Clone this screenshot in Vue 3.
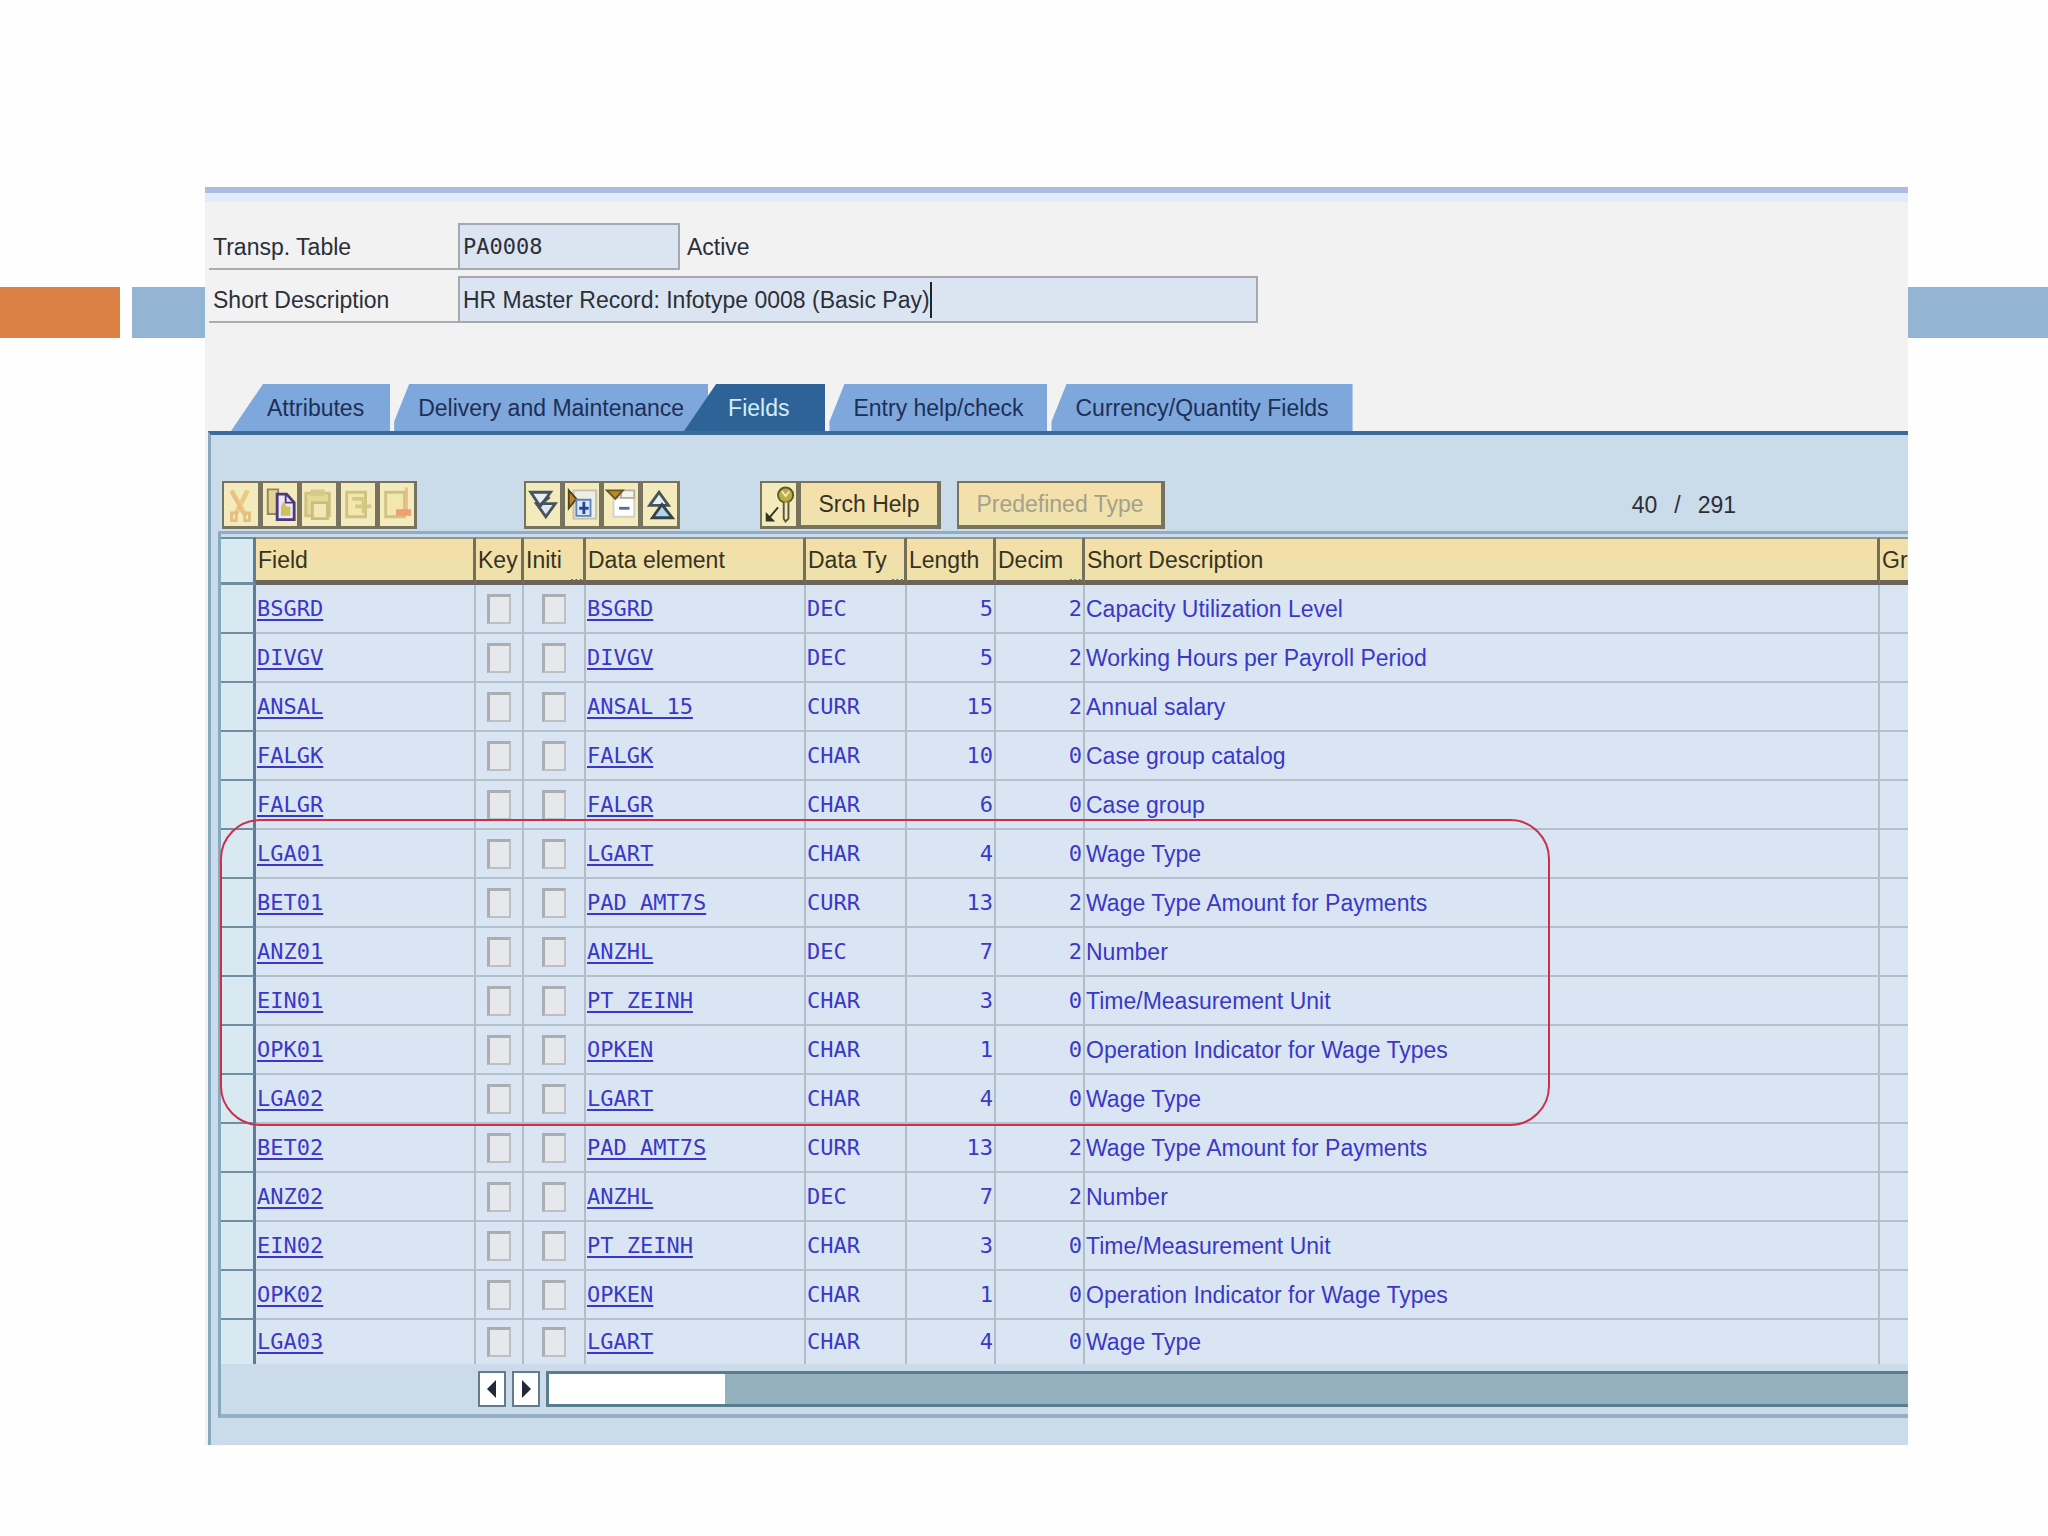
<template>
    <div class="slide">
        <div class="band">
            <div class="band-accent"></div>
            <div class="band-main"></div>
        </div>

        <main class="window">
            <!-- Header fields -->
            <form class="head" @submit.prevent>
                <div class="head-row">
                    <label for="table-name" class="head-label">Transp. Table</label>
                    <input
                        id="table-name"
                        v-model="tableName"
                        class="box box-name"
                        type="text"
                    />
                    <span class="status">Active</span>
                </div>
                <div class="head-row">
                    <label for="table-text" class="head-label">Short Description</label>
                    <div class="box box-text">
                        <input
                            id="table-text"
                            v-model="tableText"
                            class="text-input"
                            type="text"
                        />
                        <span class="caret"></span>
                    </div>
                </div>
            </form>

            <!-- Tabs -->
            <nav class="tabs">
                <button
                    v-for="tab in tabs"
                    :key="tab"
                    type="button"
                    class="tab"
                    :class="{ active: tab === activeTab }"
                    @click="activeTab = tab"
                >
                    {{ tab }}
                </button>
            </nav>

            <section class="body">
                <!-- Toolbar -->
                <div class="toolbar">
                    <div class="group group-edit">
                        <button type="button" class="tool" disabled aria-label="Cut">
                            <svg viewBox="0 0 36 44">
                                <path d="M8 7l15 27M25 7L12 33" stroke="#e6cc84" stroke-width="5" fill="none" />
                                <path d="M8 9l12 22" stroke="#efb98a" stroke-width="3" fill="none" />
                                <path d="M8 31h5v8H8zM22 31h5v8h-5z" stroke="#e5bd80" stroke-width="3" fill="none" />
                            </svg>
                        </button>
                        <button type="button" class="tool" aria-label="Copy">
                            <svg viewBox="0 0 36 44">
                                <path d="M5 6h11v26H5z" fill="#e3d491" stroke="#8f8560" stroke-width="2" />
                                <path d="M15 11h10l8 9v18H15z" fill="#ece6ff" stroke="#4b3b7c" stroke-width="3" />
                                <path d="M24 11v9h9" fill="none" stroke="#4b3b7c" stroke-width="2" />
                                <path d="M19 34V24l3-5 3 5h4v10z" fill="#cfc058" />
                            </svg>
                        </button>
                        <button type="button" class="tool" disabled aria-label="Paste">
                            <svg viewBox="0 0 36 44">
                                <path d="M4 10h25v24H4z" fill="#e5d998" stroke="#cfc182" stroke-width="3" />
                                <path d="M9 6h15v7H9z" fill="#d8ca8c" />
                                <path d="M11 20h16v17H11z" fill="#f2e8b4" stroke="#cbbd80" stroke-width="3" />
                            </svg>
                        </button>
                        <button type="button" class="tool" disabled aria-label="Insert row">
                            <svg viewBox="0 0 36 44">
                                <path d="M6 9h20v26H6z" fill="#f2e8ae" stroke="#cfc284" stroke-width="3" />
                                <path d="M12 16h12M15 24h17M24 18v13" stroke="#d6c884" stroke-width="4" />
                            </svg>
                        </button>
                        <button type="button" class="tool" disabled aria-label="Delete row">
                            <svg viewBox="0 0 36 44">
                                <path d="M6 9h20v26H6z" fill="#f2e8ae" stroke="#cfc284" stroke-width="3" />
                                <path d="M28 4v24" stroke="#f2b88c" stroke-width="3" />
                                <path d="M17 27h16v7H17z" fill="#eea070" />
                            </svg>
                        </button>
                    </div>

                    <div class="group group-tree">
                        <button type="button" class="tool" aria-label="Expand all">
                            <svg viewBox="0 0 36 44">
                                <path d="M11 21h20L21 35z" fill="#dce9f2" stroke="#46555a" stroke-width="3" />
                                <path d="M5 9h21L15 24z" fill="#e6eef4" stroke="#46555a" stroke-width="3" />
                                <path d="M13 24L25 14" fill="none" stroke="#46555a" stroke-width="3" />
                            </svg>
                        </button>
                        <button type="button" class="tool" aria-label="Expand">
                            <svg viewBox="0 0 36 44">
                                <path d="M9 7h24v30H9z" fill="#efeee6" stroke="#c4bfae" stroke-width="2" />
                                <path d="M4 7l8 9-8 10z" fill="#b78a2c" stroke="#54421c" stroke-width="2" />
                                <path d="M12 17h15v17H12z" fill="#dbe8ff" stroke="#5b84bc" stroke-width="2" />
                                <path d="M20 19v13M15 26h10" stroke="#25459a" stroke-width="3" />
                            </svg>
                        </button>
                        <button type="button" class="tool" aria-label="Collapse">
                            <svg viewBox="0 0 36 44">
                                <path d="M10 15h22v20H10z" fill="#fff" stroke="#d4d2c4" stroke-width="2" />
                                <path d="M18 7h14v8H18z" fill="#f4f3ee" stroke="#b4b1a4" stroke-width="2" />
                                <path d="M3 7h17l-8 9z" fill="#b78a2c" stroke="#6b5320" stroke-width="2" />
                                <path d="M16 26h11" stroke="#5668a8" stroke-width="3" />
                            </svg>
                        </button>
                        <button type="button" class="tool" aria-label="Collapse all">
                            <svg viewBox="0 0 36 44">
                                <path d="M17 9l10 14H7z" fill="#e6eef4" stroke="#46555a" stroke-width="3" />
                                <path d="M20 22l11 14H10z" fill="#b4d4ea" stroke="#33434a" stroke-width="3" />
                            </svg>
                        </button>
                    </div>

                    <div class="group group-help">
                        <button type="button" class="tool" aria-label="Foreign keys">
                            <svg viewBox="0 0 36 44">
                                <circle cx="25" cy="12" r="8" fill="#b8ad48" stroke="#5d582c" stroke-width="2" />
                                <path d="M21 8l4 5 4-5" fill="none" stroke="#f5edb8" stroke-width="2" />
                                <path d="M23 20v17l2 3 3-3V20" fill="#efe9cc" stroke="#5d582c" stroke-width="2" />
                                <path d="M17 25L7 37" stroke="#32321f" stroke-width="2" />
                                <path d="M4 30v10h10z" fill="#32321f" />
                            </svg>
                        </button>
                        <button type="button" class="push push-search">Srch Help</button>
                    </div>
                    <button type="button" class="push push-type" disabled>Predefined Type</button>

                    <div class="counter">
                        <span>40</span>
                        <span>/</span>
                        <span>291</span>
                    </div>
                </div>

                <!-- Field list -->
                <div class="frame">
                    <table class="grid">
                        <colgroup>
                            <col class="c-sel" />
                            <col class="c-field" />
                            <col class="c-key" />
                            <col class="c-init" />
                            <col class="c-elem" />
                            <col class="c-type" />
                            <col class="c-num" />
                            <col class="c-num" />
                            <col />
                            <col class="c-group" />
                        </colgroup>
                        <thead>
                            <tr>
                                <th class="sel"></th>
                                <th v-for="col in columns" :key="col.label">
                                    {{ col.label }}
                                    <i v-if="col.cut" class="cut">...</i>
                                </th>
                            </tr>
                        </thead>
                        <tbody>
                            <tr v-for="row in rows" :key="row[0]">
                                <td class="sel"></td>
                                <td class="mono"><a href="#">{{ row[0] }}</a></td>
                                <td class="check">
                                    <input type="checkbox" :aria-label="row[0] + ' key'" />
                                </td>
                                <td class="check">
                                    <input type="checkbox" :aria-label="row[0] + ' initial'" />
                                </td>
                                <td class="mono"><a href="#">{{ row[1] }}</a></td>
                                <td class="mono">{{ row[2] }}</td>
                                <td class="mono num">{{ row[3] }}</td>
                                <td class="mono num">{{ row[4] }}</td>
                                <td class="desc">{{ row[5] }}</td>
                                <td></td>
                            </tr>
                        </tbody>
                    </table>

                    <div class="scroll">
                        <button type="button" class="arrow" aria-label="Scroll left">
                            <svg viewBox="0 0 20 28"><path d="M14 5v18L5 14z" fill="#222a38" /></svg>
                        </button>
                        <button type="button" class="arrow" aria-label="Scroll right">
                            <svg viewBox="0 0 20 28"><path d="M6 5v18l9-9z" fill="#222a38" /></svg>
                        </button>
                        <div class="track">
                            <div class="thumb"></div>
                        </div>
                    </div>

                    <div class="marker"></div>
                </div>
            </section>
        </main>
    </div>
</template>

<script setup>
import { ref } from "vue";

const tableName = ref("PA0008");
const tableText = ref("HR Master Record: Infotype 0008 (Basic Pay)");

const tabs = [
    "Attributes",
    "Delivery and Maintenance",
    "Fields",
    "Entry help/check",
    "Currency/Quantity Fields",
];
const activeTab = ref("Fields");

const columns = [
    { label: "Field" },
    { label: "Key" },
    { label: "Initi", cut: true },
    { label: "Data element" },
    { label: "Data Ty", cut: true },
    { label: "Length" },
    { label: "Decim", cut: true },
    { label: "Short Description" },
    { label: "Gr" },
];

// field, data element, type, length, decimals, description
const rows = [
    ["BSGRD", "BSGRD", "DEC", 5, 2, "Capacity Utilization Level"],
    ["DIVGV", "DIVGV", "DEC", 5, 2, "Working Hours per Payroll Period"],
    ["ANSAL", "ANSAL_15", "CURR", 15, 2, "Annual salary"],
    ["FALGK", "FALGK", "CHAR", 10, 0, "Case group catalog"],
    ["FALGR", "FALGR", "CHAR", 6, 0, "Case group"],
    ["LGA01", "LGART", "CHAR", 4, 0, "Wage Type"],
    ["BET01", "PAD_AMT7S", "CURR", 13, 2, "Wage Type Amount for Payments"],
    ["ANZ01", "ANZHL", "DEC", 7, 2, "Number"],
    ["EIN01", "PT_ZEINH", "CHAR", 3, 0, "Time/Measurement Unit"],
    ["OPK01", "OPKEN", "CHAR", 1, 0, "Operation Indicator for Wage Types"],
    ["LGA02", "LGART", "CHAR", 4, 0, "Wage Type"],
    ["BET02", "PAD_AMT7S", "CURR", 13, 2, "Wage Type Amount for Payments"],
    ["ANZ02", "ANZHL", "DEC", 7, 2, "Number"],
    ["EIN02", "PT_ZEINH", "CHAR", 3, 0, "Time/Measurement Unit"],
    ["OPK02", "OPKEN", "CHAR", 1, 0, "Operation Indicator for Wage Types"],
    ["LGA03", "LGART", "CHAR", 4, 0, "Wage Type"],
];
</script>

<style>
body {
    background: #fefefe;
}
</style>

<style scoped>
.slide {
    position: relative;
    padding: 187px 140px 91px 205px;
    font-family: "Liberation Sans", Arial, sans-serif;
    font-size: 23px;
    line-height: 32px;
    color: #2b2f36;
}

.slide * {
    box-sizing: border-box;
}

button,
input {
    font: inherit;
    color: inherit;
    margin: 0;
    padding: 0;
    border: 0;
    border-radius: 0;
    background: none;
}

svg {
    display: block;
    width: 100%;
    height: 100%;
}

/* Coloured strip behind the window */
.band {
    position: absolute;
    top: 287px;
    left: 0;
    right: 0;
    height: 51px;
    display: flex;
    gap: 12px;
}

.band-accent {
    width: 120px;
    background: #db8144;
}

.band-main {
    flex: 1;
    background: #94b4d3;
}

.window {
    position: relative;
    overflow: hidden;
    background: #f2f2f3;
    border-top: 6px solid #aebce2;
}

/* Header fields */
.head {
    display: flex;
    flex-direction: column;
    gap: 6px;
    padding: 30px 0 0 4px;
    box-shadow: inset 0 9px 0 #e2ebfb;
}

.head-row {
    display: flex;
    height: 47px;
}

.head-label {
    width: 249px;
    padding: 8px 0 0 4px;
    border-bottom: 2px solid #acacae;
}

.box {
    height: 47px;
    border: 2px solid #a3a8b2;
    background: #dbe5f1;
}

.box-name {
    width: 222px;
    padding: 0 3px;
    font-family: "DejaVu Sans Mono", monospace;
    font-size: 22px;
}

.box-text {
    display: flex;
    align-items: center;
    width: 800px;
    padding: 2px 3px;
}

.text-input {
    field-sizing: content;
    height: 32px;
}

.caret {
    width: 2px;
    height: 36px;
    background: #20242c;
}

.status {
    padding: 8px 0 0 7px;
}

/* Tabs */
.tabs {
    display: flex;
    padding: 61px 0 0 26px;
}

.tab {
    height: 47px;
    padding: 0 24px;
    margin-right: 4px;
    background: #7ea8dc;
    color: #1d2f57;
    white-space: nowrap;
    clip-path: polygon(0 100%, 0 80%, 15px 0, 100% 0, 100% 100%);
}

.tab:first-child {
    padding: 0 26px 0 36px;
    clip-path: polygon(0 100%, 32px 0, 100% 0, 100% 100%);
}

.tab.active {
    margin-left: -28px;
    padding: 0 36px 0 44px;
    background: #2d6397;
    color: #d6ecfa;
    clip-path: polygon(0 100%, 32px 0, 100% 0, 100% 100%);
}

.body {
    margin-left: 3px;
    padding: 46px 0 27px 7px;
    border-top: 4px solid #3c6c9c;
    border-left: 3px solid #86a9bd;
    background: #cadbea;
}

/* Toolbar */
.toolbar {
    display: flex;
    align-items: center;
    height: 48px;
    padding-left: 4px;
    margin-bottom: 2px;
}

.group {
    display: flex;
}

.group-edit {
    margin-right: 107px;
}

.group-tree {
    margin-right: 80px;
}

.group-help {
    margin-right: 16px;
}

.tool {
    width: 39px;
    height: 48px;
    border: 2px solid #77735f;
    border-right-width: 3px;
    border-bottom-width: 3px;
    background: #f3ebbc;
}

.push {
    height: 48px;
    border: 2px solid #77735f;
    border-right-width: 4px;
    border-bottom-width: 4px;
    background: linear-gradient(#f6dfa9, #efe3ae);
    color: #37331f;
    white-space: nowrap;
}

.push-search {
    width: 142px;
}

.push-type {
    width: 208px;
    color: #a3a18b;
}

.counter {
    display: flex;
    gap: 17px;
    margin-left: auto;
    padding-right: 172px;
}

/* Field list */
.frame {
    position: relative;
    padding-top: 3px;
    border-top: 3px solid #8fadc6;
    border-left: 3px solid #86a9bd;
    border-bottom: 4px solid #96afc9;
    background: #ccdbea;
}

.grid {
    width: 100%;
    table-layout: fixed;
    border-collapse: separate;
    border-spacing: 0;
}

.c-sel {
    width: 35px;
}

.c-field,
.c-elem {
    width: 220px;
}

.c-key {
    width: 48px;
}

.c-init {
    width: 62px;
}

.c-type {
    width: 101px;
}

.c-num {
    width: 89px;
}

.c-group {
    width: 28px;
}

th {
    position: relative;
    height: 48px;
    padding: 0 0 0 2px;
    overflow: hidden;
    border-top: 2px solid #8a9a8c;
    border-right: 3px solid #75705c;
    border-bottom: 5px solid #6c6458;
    background: linear-gradient(#f6dea8, #ece2aa);
    color: #37331f;
    font-weight: normal;
    text-align: left;
    white-space: nowrap;
}

th:last-child {
    border-right: 0;
}

.cut {
    position: absolute;
    right: 0;
    bottom: 0;
    font-size: 16px;
    line-height: 8px;
    font-style: normal;
}

td {
    height: 49px;
    padding: 0 0 0 1px;
    border-right: 2px solid #b1bec8;
    border-bottom: 2px solid #b3bfcb;
    background: #dae5f3;
    color: #3a38c8;
    white-space: nowrap;
    line-height: 30px;
}

td:last-child {
    border-right: 0;
}

tbody tr:last-child td {
    height: 44px;
    border-bottom: 0;
}

.sel {
    border-right: 3px solid #5d7c98;
    background: #d9e9f2;
}

th.sel {
    border-top-color: #6f8fa0;
    border-bottom: 3px solid #6f8fa0;
}

td.sel {
    border-bottom-color: #6f8fa0;
}

.mono {
    font-family: "DejaVu Sans Mono", monospace;
    font-size: 22px;
}

.mono a {
    color: inherit;
    text-decoration: underline;
    text-decoration-thickness: 2px;
    text-underline-offset: 3px;
}

.num {
    padding-right: 1px;
    text-align: right;
}

.check {
    padding: 0;
    text-align: center;
}

.check input {
    appearance: none;
    display: block;
    width: 24px;
    height: 30px;
    margin: 0 auto;
    border: 3px solid #aaaeb2;
    border-right: 2px solid #bcc0c4;
    border-bottom: 2px solid #bcc0c4;
    background: #e6e8ec;
}

/* Horizontal scrollbar */
.scroll {
    display: flex;
    gap: 6px;
    padding: 7px 0 7px 257px;
}

.arrow {
    width: 28px;
    height: 36px;
    padding: 2px;
    border: 2px solid #5f7c90;
    background: #fff;
}

.track {
    flex: 1;
    height: 36px;
    border: 3px solid #5a7c8f;
    border-right: 0;
    background: #95b1c0;
}

.thumb {
    width: 176px;
    height: 100%;
    background: #fff;
}

/* Red outline around the wage type block */
.marker {
    position: absolute;
    top: 285px;
    left: -1px;
    width: 1330px;
    height: 307px;
    border: 2px solid #c9304c;
    border-radius: 40px;
    pointer-events: none;
}
</style>
